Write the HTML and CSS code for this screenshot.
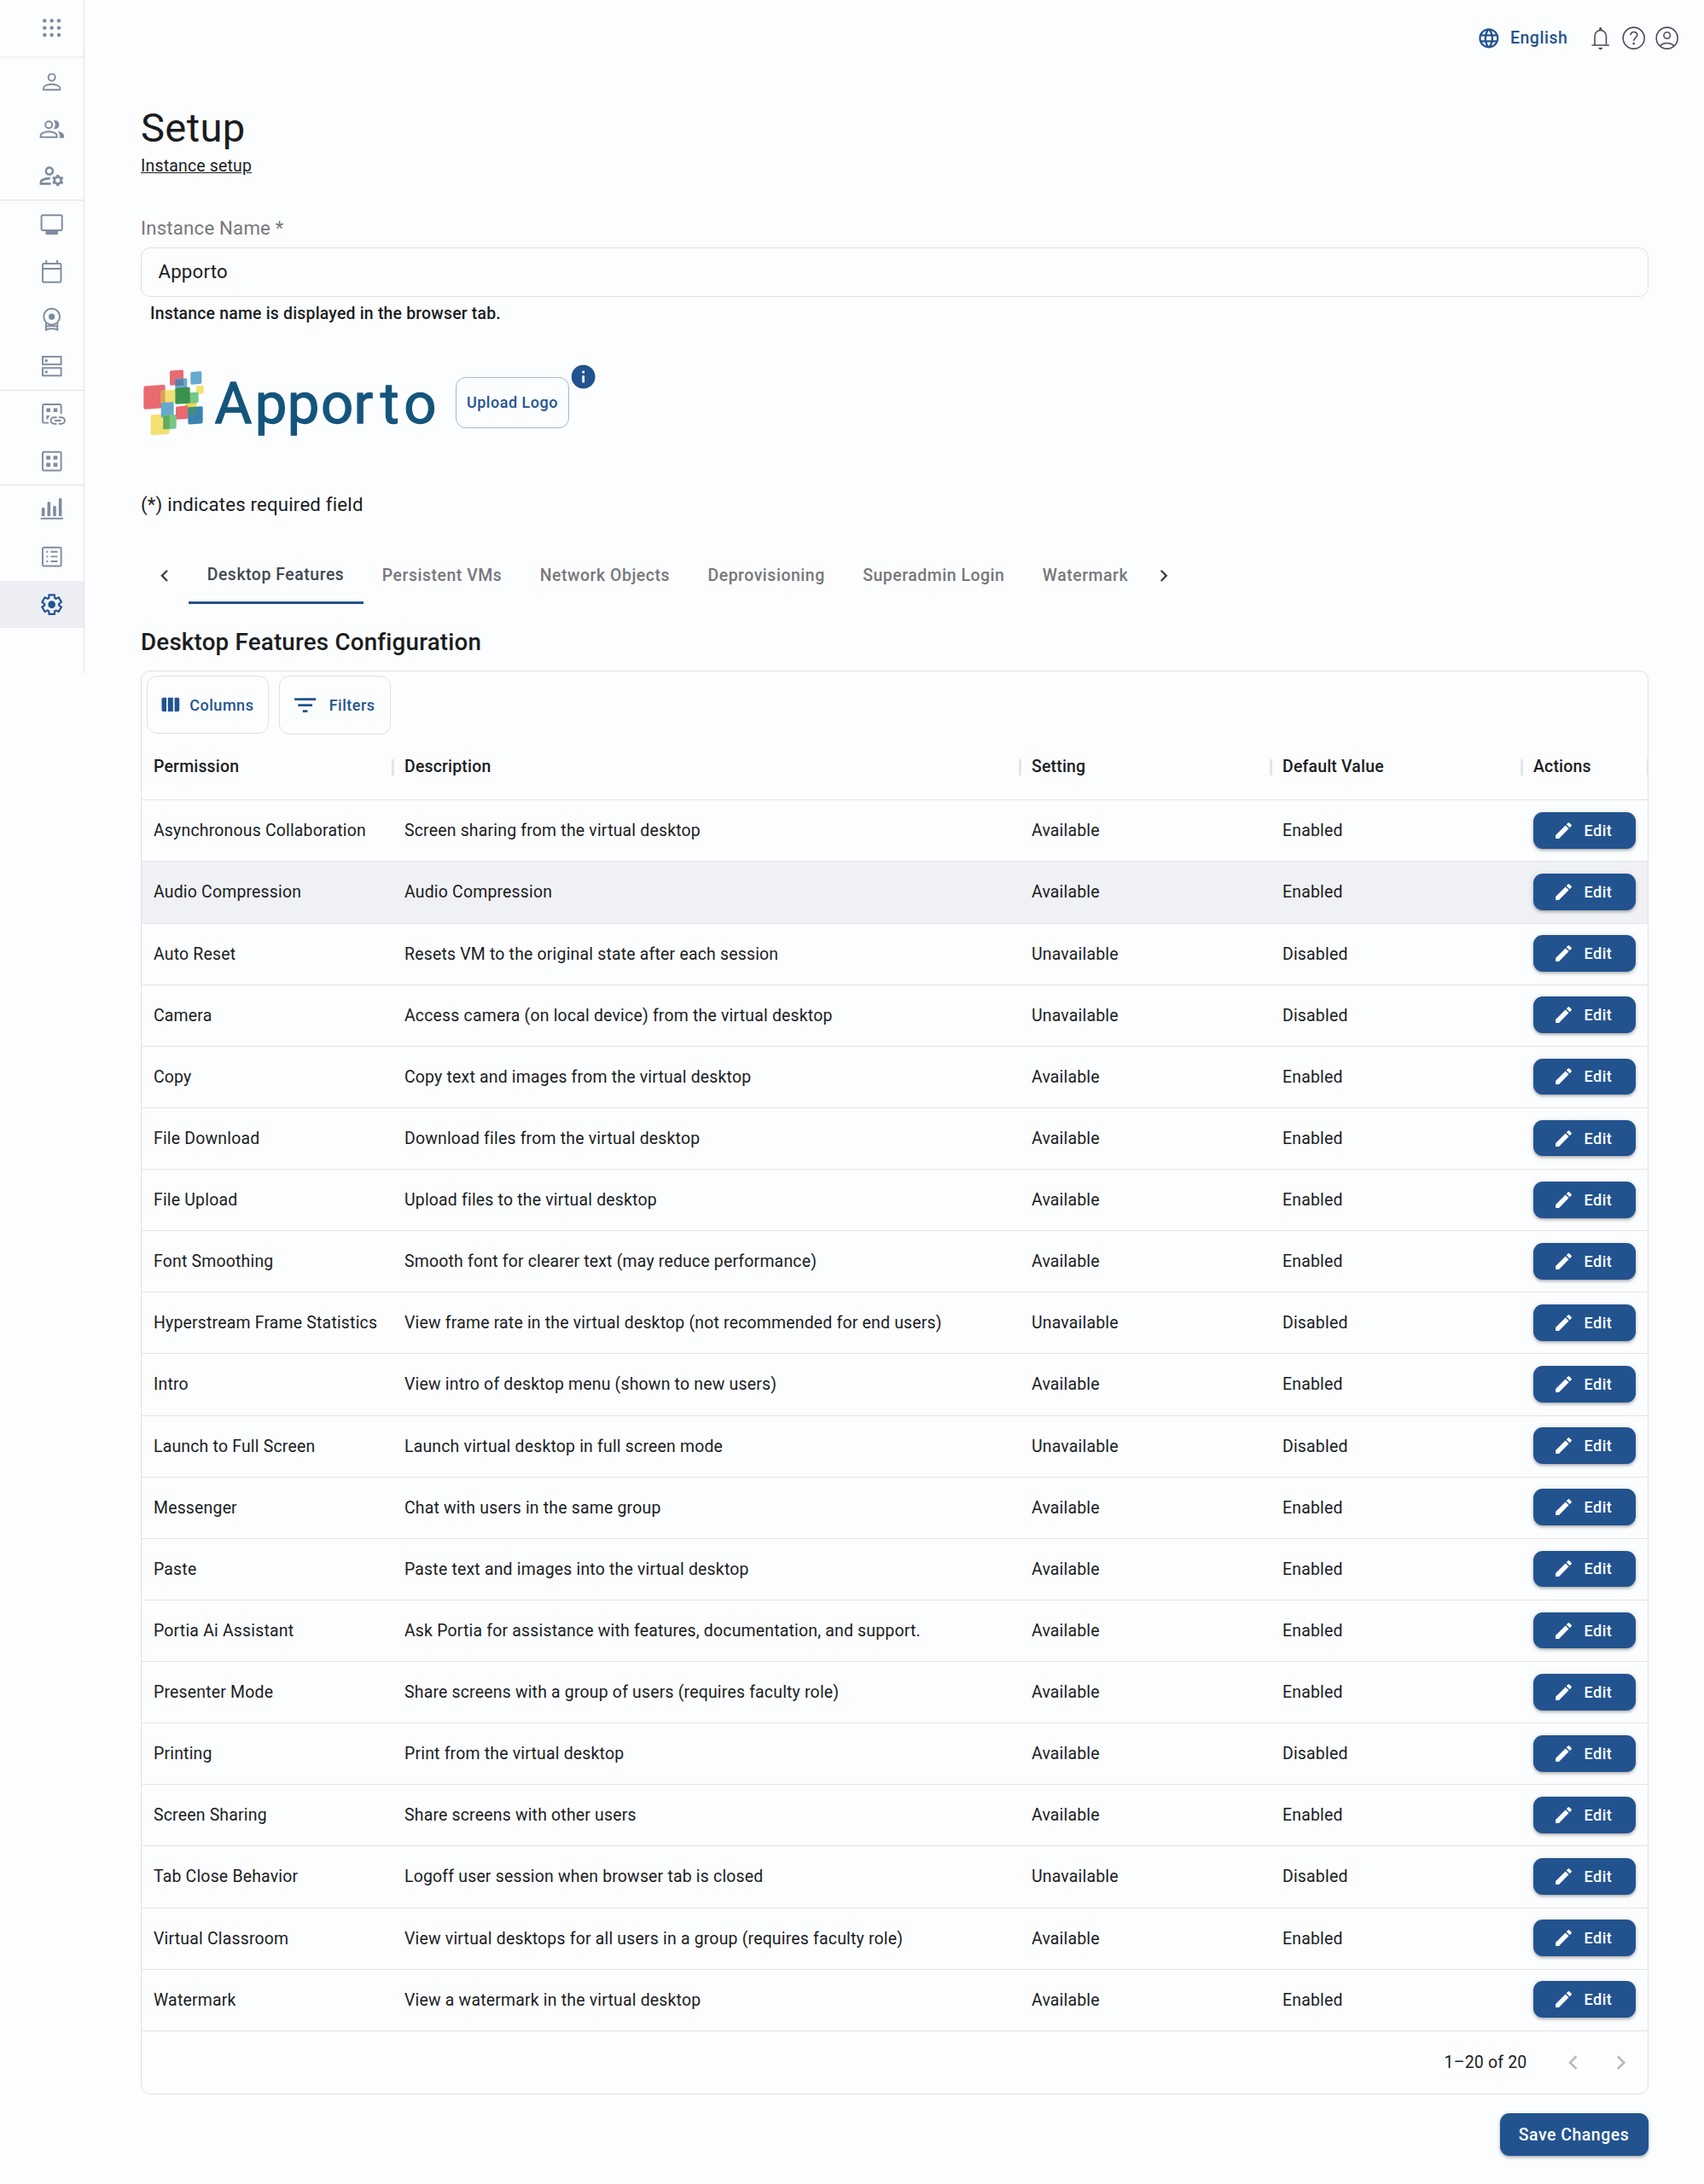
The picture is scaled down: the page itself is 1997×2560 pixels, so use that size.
FILE: index.html
```html
<!DOCTYPE html>
<html lang="en">
<head>
    <meta charset="UTF-8">
    <meta name="viewport" content="width=device-width, initial-scale=1.0">
    <title>Apporto</title>
    <link rel="stylesheet" href="styles.css">
</head>
<body>

<!-- shared icons -->
<svg class="sprite">
    <symbol id="pencil" viewBox="0 0 24 24"><path d="M3 17.25V21h3.75L17.81 9.94l-3.75-3.75L3 17.25zM20.71 7.04c.39-.39.39-1.02 0-1.41l-2.34-2.34a1 1 0 0 0-1.41 0l-1.83 1.83 3.75 3.75 1.83-1.83z"/></symbol>
    <symbol id="left" viewBox="0 0 24 24"><path d="M15.41 16.59 10.83 12l4.58-4.59L14 6l-6 6 6 6z"/></symbol>
    <symbol id="right" viewBox="0 0 24 24"><path d="M8.59 16.59 13.17 12 8.59 7.41 10 6l6 6-6 6z"/></symbol>
    <symbol id="cog" viewBox="0 0 24 24"><path d="M9.25 22l-.4-3.2q-.325-.125-.612-.3-.288-.175-.563-.375L4.7 19.375l-2.75-4.75 2.575-1.95Q4.5 12.5 4.5 12.338v-.675q0-.163.025-.338L1.95 9.375l2.75-4.75 2.975 1.25q.275-.2.575-.375.3-.175.6-.3l.4-3.2h5.5l.4 3.2q.325.125.613.3.287.175.562.375l2.975-1.25 2.75 4.75-2.575 1.95q.025.175.025.338v.674q0 .163-.05.338l2.575 1.95-2.75 4.75-2.95-1.25q-.275.2-.575.375-.3.175-.6.3l-.4 3.2z"/></symbol>
</svg>

<nav class="sidebar">
    <a class="side-item apps"><svg class="icon fill" viewBox="0 0 24 24"><circle cx="6" cy="6" r="1.6"/><circle cx="12" cy="6" r="1.6"/><circle cx="18" cy="6" r="1.6"/><circle cx="6" cy="12" r="1.6"/><circle cx="12" cy="12" r="1.6"/><circle cx="18" cy="12" r="1.6"/><circle cx="6" cy="18" r="1.6"/><circle cx="12" cy="18" r="1.6"/><circle cx="18" cy="18" r="1.6"/></svg></a>
    <a class="side-item"><svg class="icon" viewBox="0 0 24 24"><circle cx="12" cy="8.4" r="2.9"/><path d="M5.1 18.9v-1.3c0-1 .5-1.6 1.4-2.1 1.5-.8 3.5-1.3 5.5-1.3s4 .5 5.5 1.3c.9.5 1.4 1.1 1.4 2.1v1.3z"/></svg></a>
    <a class="side-item"><svg class="icon" viewBox="0 0 24 24"><circle cx="9.5" cy="8.1" r="2.9"/><path d="M2.6 18.6v-1.3c0-1 .5-1.6 1.4-2.1 1.5-.8 3.5-1.3 5.5-1.3s3.9.5 5.4 1.3c.9.5 1.4 1.1 1.4 2.1v1.3z"/><path class="solid" d="M13.6 11.6a5.5 5.5 0 0 0 0-7.1 3.7 3.7 0 1 1 0 7.1zM18.7 19.3v-2.1c0-1.5-.7-2.7-1.9-3.7 3 .5 5.5 1.7 5.5 3.7v2.1z"/></svg></a>
    <a class="side-item line"><svg class="icon" viewBox="0 0 24 24"><g class="bold"><circle cx="10" cy="7.5" r="2.9"/><path d="M11.3 18.3H2.8v-1.3c0-1 .5-1.6 1.4-2 1.7-.8 3.6-1.3 5.8-1.2h.7"/></g><circle cx="17.1" cy="15.4" r="2.8" class="bold"/><path class="solid" d="M16.1 10.6h2l.5 2h-3zM16.1 20.2h2l.5-2h-3zM12.4 13.9l1-1.8 2 .7-1.3 2.2zM20.8 12.1l1 1.8-1.6 1.3-1.3-2.2zM12.4 16.9l1 1.8 2-.7-1.3-2.2zM20.8 18.7l1-1.8-1.6-1.3-1.3 2.2z"/></svg></a>
    <a class="side-item"><svg class="icon" viewBox="0 0 24 24"><rect x="3.3" y="4.5" width="17.4" height="12.8" rx="1"/><path class="solid" d="M6.8 17.5h10.5v2.5a.9.9 0 0 1-.9.9H7.7a.9.9 0 0 1-.9-.9z"/></svg></a>
    <a class="side-item"><svg class="icon" viewBox="0 0 24 24"><rect x="4.3" y="5" width="15.5" height="15.7" rx="1"/><path d="M4.3 9.4h15.5M7.4 5V2.2M16.6 5V2.2"/></svg></a>
    <a class="side-item"><svg class="icon" viewBox="0 0 24 24"><circle cx="12" cy="9.5" r="6.8"/><circle class="solid" cx="12" cy="9.5" r="2.6"/><path d="M7.2 14.6v6.1c1.6-.7 3.2-1 4.8-1s3.2.3 4.8 1v-6.1M7.2 17.7c3.2-.6 6.4-.6 9.6 0"/></svg></a>
    <a class="side-item line"><svg class="icon" viewBox="0 0 24 24"><rect x="4.3" y="3.7" width="15.6" height="6.5"/><rect x="4.3" y="13.2" width="15.6" height="6.5"/><circle class="solid" cx="7.4" cy="7" r="1.2"/><circle class="solid" cx="7.4" cy="16.5" r="1.2"/></svg></a>
    <a class="side-item"><svg class="icon" viewBox="0 0 24 24"><path d="M19.9 11.6V4.6a1 1 0 0 0-1-1H5.4a1 1 0 0 0-1 1v13.6a1 1 0 0 0 1 1h4"/><path class="solid" d="M7.5 6.8h3.3v3.3H7.5zM13.5 6.8h3.3v3.3h-3.3zM7.5 13h3l-1.2 1.6-.6 1.6H7.5z"/><path d="M16.2 14.6h-2.3a2.7 2.7 0 0 0 0 5.4h2.3M18 14.6h2.3a2.7 2.7 0 0 1 0 5.4H18M14.4 17.3h5.4"/></svg></a>
    <a class="side-item line"><svg class="icon" viewBox="0 0 24 24"><rect x="4.3" y="4.2" width="15.6" height="15.6" rx="1"/><path class="solid" d="M7.4 7.3h3.4v3.4H7.4zM13.4 7.3h3.4v3.4h-3.4zM7.4 13.3h3.4v3.4H7.4zM13.4 13.3h3.4v3.4h-3.4z"/></svg></a>
    <a class="side-item"><svg class="icon" viewBox="0 0 24 24"><path class="solid" d="M3.5 12a1.3 1.3 0 0 1 2.6 0v6H3.5zM8.3 7a1.3 1.3 0 0 1 2.6 0v11H8.3zM13.1 10.5a1.3 1.3 0 0 1 2.6 0V18h-2.6zM17.9 4a1.3 1.3 0 0 1 2.6 0v14h-2.6zM2.6 19.3h19v1.4h-19z"/></svg></a>
    <a class="side-item"><svg class="icon" viewBox="0 0 24 24"><rect x="4.3" y="4.2" width="15.6" height="15.6" rx="1"/><path d="M11.2 7.8h5.7M11.2 11.8h5.7M11.2 15.8h5.7M7.4 7.8h1.5M7.4 11.8h1.5M7.4 15.8h1.5"/></svg></a>
    <a class="side-item active"><svg class="icon" viewBox="0 0 24 24"><use class="gear" href="#cog" x="2.3" y="2.3" width="19.4" height="19.4"/><circle class="solid" cx="12" cy="12" r="3.1"/></svg></a>
</nav>

<div class="main">
    <header class="topbar">
        <a class="language">
            <svg viewBox="0 0 24 24"><path d="M11.99 2C6.47 2 2 6.48 2 12s4.47 10 9.99 10C17.52 22 22 17.52 22 12S17.52 2 11.99 2zm6.93 6h-2.95c-.32-1.25-.78-2.45-1.38-3.56 1.84.63 3.37 1.91 4.33 3.56zM12 4.04c.83 1.2 1.48 2.53 1.91 3.96h-3.82c.43-1.43 1.08-2.76 1.91-3.96zM4.26 14C4.1 13.36 4 12.69 4 12s.1-1.36.26-2h3.38c-.08.66-.14 1.32-.14 2s.06 1.34.14 2H4.26zm.82 2h2.95c.32 1.25.78 2.45 1.38 3.56-1.84-.63-3.37-1.9-4.33-3.56zm2.95-8H5.08c.96-1.66 2.49-2.93 4.33-3.56C8.81 5.55 8.35 6.75 8.03 8zM12 19.96c-.83-1.2-1.48-2.53-1.91-3.96h3.82c-.43 1.43-1.08 2.76-1.91 3.96zM14.34 14H9.66c-.09-.66-.16-1.32-.16-2s.07-1.35.16-2h4.68c.09.65.16 1.32.16 2s-.07 1.34-.16 2zm.25 5.56c.6-1.11 1.06-2.31 1.38-3.56h2.95c-.96 1.65-2.49 2.93-4.33 3.56zM16.36 14c.08-.66.14-1.32.14-2s-.06-1.34-.14-2h3.38c.16.64.26 1.31.26 2s-.1 1.36-.26 2h-3.38z"/></svg>
            English
        </a>
        <svg class="icon" viewBox="0 0 24 24"><path d="M4.7 18h14.7M7.2 18v-7.7a4.85 4.85 0 0 1 9.7 0V18"/><path class="solid" d="M10.9 5.6V4a1.15 1.15 0 0 1 2.3 0v1.6zM10.3 20h3.5a1.75 1.75 0 0 1-3.5 0z"/></svg>
        <svg class="icon" viewBox="0 0 24 24"><circle cx="12" cy="12" r="9"/><path d="M9.3 9.5c.2-1.7 1.3-2.6 2.8-2.6 1.6 0 2.8 1 2.8 2.5 0 2.1-2.8 2.5-2.8 4.9"/><circle class="solid" cx="12" cy="16.6" r="1"/></svg>
        <svg class="icon" viewBox="0 0 24 24"><circle cx="12" cy="12" r="9"/><circle cx="12" cy="9.7" r="2.7"/><path d="M6.1 18.5c1.7-1.6 3.7-2.3 5.9-2.3s4.2.7 5.9 2.3"/></svg>
    </header>

    <div class="content">
        <h1>Setup</h1>
        <a class="crumb">Instance setup</a>

        <label class="label" for="instance">Instance Name *</label>
        <input class="field" type="text" id="instance" value="Apporto">
        <div class="helper">Instance name is displayed in the browser tab.</div>

        <div class="logo-row">
            <svg class="logo" viewBox="5 0 355 110">
                <g class="logo-mark" transform="scale(.3333)">
                    <rect x="28" y="95" width="76" height="82" rx="7" fill="#e96a6f"/>
                    <rect x="120" y="42" width="48" height="52" rx="5" fill="#e96a6f"/>
                    <rect x="53" y="197" width="66" height="71" rx="6" fill="#f3e070"/>
                    <rect x="193" y="47" width="39" height="44" rx="5" fill="#65a9cf"/>
                    <rect x="213" y="96" width="26" height="29" rx="4" fill="#f3e070"/>
                    <rect x="89" y="112" width="50" height="46" rx="5" fill="#f3e070"/>
                    <rect x="89" y="114" width="15" height="42" fill="#d9a25c"/>
                    <rect x="139" y="71" width="42" height="44" rx="5" fill="#65a9cf"/>
                    <rect x="139" y="73" width="29" height="23" fill="#5c7fa9"/>
                    <rect x="174" y="140" width="40" height="42" rx="5" fill="#ecd84f"/>
                    <rect x="184" y="120" width="37" height="38" rx="5" fill="#73c787"/>
                    <rect x="139" y="103" width="52" height="57" rx="5" fill="#3a924e"/>
                    <rect x="89" y="155" width="45" height="52" rx="5" fill="#65a9cf"/>
                    <rect x="141" y="168" width="44" height="46" rx="5" fill="#e96a6f"/>
                    <rect x="184" y="170" width="52" height="61" rx="6" fill="#3a83b0"/>
                    <rect x="184" y="173" width="29" height="24" fill="#3f8f7c"/>
                    <rect x="97" y="199" width="46" height="50" rx="5" fill="#73c787"/>
                    <rect x="97" y="201" width="22" height="47" rx="3" fill="#62ac5b"/>
                </g>
                <text class="logo-text" y="75.8" x="92.5 139.8 177.8 217 255.4 286.7 314.3">Apporto</text>
            </svg>
            <button class="btn-outline upload">Upload Logo</button>
            <svg class="info" viewBox="0 0 24 24"><circle cx="12" cy="12" r="10"/><path d="M11 7h2v2h-2zM11 11h2v6h-2z"/></svg>
        </div>

        <div class="required">(*) indicates required field</div>

        <div class="tabs">
            <span class="tab-scroll"><svg><use href="#left"/></svg></span>
            <a class="tab selected">Desktop Features</a>
            <a class="tab">Persistent VMs</a>
            <a class="tab">Network Objects</a>
            <a class="tab">Deprovisioning</a>
            <a class="tab">Superadmin Login</a>
            <a class="tab">Watermark</a>
            <span class="tab-scroll next"><svg><use href="#right"/></svg></span>
        </div>

        <h2>Desktop Features Configuration</h2>

        <div class="grid">
            <div class="toolbar">
                <button class="btn-outline columns"><svg viewBox="0 0 24 24"><path d="M3 6.5A1.5 1.5 0 0 1 4.5 5h3.3v14H4.5A1.5 1.5 0 0 1 3 17.5zM9.3 5h5.3v14H9.3zM16.1 5h3.4A1.5 1.5 0 0 1 21 6.5v11a1.5 1.5 0 0 1-1.5 1.5h-3.4z"/></svg>Columns</button>
                <button class="btn-outline filters"><svg viewBox="0 0 24 24"><path d="M10 18h4v-2h-4v2zM3 6v2h18V6H3zm3 7h12v-2H6v2z"/></svg>Filters</button>
            </div>
            <div class="row head"><div>Permission</div><div>Description</div><div>Setting</div><div>Default Value</div><div>Actions</div></div>
            <div class="row"><div>Asynchronous Collaboration</div><div>Screen sharing from the virtual desktop</div><div>Available</div><div>Enabled</div><div><button class="btn edit"><svg><use href="#pencil"/></svg>Edit</button></div></div>
            <div class="row hover"><div>Audio Compression</div><div>Audio Compression</div><div>Available</div><div>Enabled</div><div><button class="btn edit"><svg><use href="#pencil"/></svg>Edit</button></div></div>
            <div class="row"><div>Auto Reset</div><div>Resets VM to the original state after each session</div><div>Unavailable</div><div>Disabled</div><div><button class="btn edit"><svg><use href="#pencil"/></svg>Edit</button></div></div>
            <div class="row"><div>Camera</div><div>Access camera (on local device) from the virtual desktop</div><div>Unavailable</div><div>Disabled</div><div><button class="btn edit"><svg><use href="#pencil"/></svg>Edit</button></div></div>
            <div class="row"><div>Copy</div><div>Copy text and images from the virtual desktop</div><div>Available</div><div>Enabled</div><div><button class="btn edit"><svg><use href="#pencil"/></svg>Edit</button></div></div>
            <div class="row"><div>File Download</div><div>Download files from the virtual desktop</div><div>Available</div><div>Enabled</div><div><button class="btn edit"><svg><use href="#pencil"/></svg>Edit</button></div></div>
            <div class="row"><div>File Upload</div><div>Upload files to the virtual desktop</div><div>Available</div><div>Enabled</div><div><button class="btn edit"><svg><use href="#pencil"/></svg>Edit</button></div></div>
            <div class="row"><div>Font Smoothing</div><div>Smooth font for clearer text (may reduce performance)</div><div>Available</div><div>Enabled</div><div><button class="btn edit"><svg><use href="#pencil"/></svg>Edit</button></div></div>
            <div class="row"><div>Hyperstream Frame Statistics</div><div>View frame rate in the virtual desktop (not recommended for end users)</div><div>Unavailable</div><div>Disabled</div><div><button class="btn edit"><svg><use href="#pencil"/></svg>Edit</button></div></div>
            <div class="row"><div>Intro</div><div>View intro of desktop menu (shown to new users)</div><div>Available</div><div>Enabled</div><div><button class="btn edit"><svg><use href="#pencil"/></svg>Edit</button></div></div>
            <div class="row"><div>Launch to Full Screen</div><div>Launch virtual desktop in full screen mode</div><div>Unavailable</div><div>Disabled</div><div><button class="btn edit"><svg><use href="#pencil"/></svg>Edit</button></div></div>
            <div class="row"><div>Messenger</div><div>Chat with users in the same group</div><div>Available</div><div>Enabled</div><div><button class="btn edit"><svg><use href="#pencil"/></svg>Edit</button></div></div>
            <div class="row"><div>Paste</div><div>Paste text and images into the virtual desktop</div><div>Available</div><div>Enabled</div><div><button class="btn edit"><svg><use href="#pencil"/></svg>Edit</button></div></div>
            <div class="row"><div>Portia Ai Assistant</div><div>Ask Portia for assistance with features, documentation, and support.</div><div>Available</div><div>Enabled</div><div><button class="btn edit"><svg><use href="#pencil"/></svg>Edit</button></div></div>
            <div class="row"><div>Presenter Mode</div><div>Share screens with a group of users (requires faculty role)</div><div>Available</div><div>Enabled</div><div><button class="btn edit"><svg><use href="#pencil"/></svg>Edit</button></div></div>
            <div class="row"><div>Printing</div><div>Print from the virtual desktop</div><div>Available</div><div>Disabled</div><div><button class="btn edit"><svg><use href="#pencil"/></svg>Edit</button></div></div>
            <div class="row"><div>Screen Sharing</div><div>Share screens with other users</div><div>Available</div><div>Enabled</div><div><button class="btn edit"><svg><use href="#pencil"/></svg>Edit</button></div></div>
            <div class="row"><div>Tab Close Behavior</div><div>Logoff user session when browser tab is closed</div><div>Unavailable</div><div>Disabled</div><div><button class="btn edit"><svg><use href="#pencil"/></svg>Edit</button></div></div>
            <div class="row"><div>Virtual Classroom</div><div>View virtual desktops for all users in a group (requires faculty role)</div><div>Available</div><div>Enabled</div><div><button class="btn edit"><svg><use href="#pencil"/></svg>Edit</button></div></div>
            <div class="row"><div>Watermark</div><div>View a watermark in the virtual desktop</div><div>Available</div><div>Enabled</div><div><button class="btn edit"><svg><use href="#pencil"/></svg>Edit</button></div></div>
            <div class="pager">
                <span>1–20 of 20</span>
                <svg><use href="#left"/></svg>
                <svg><use href="#right"/></svg>
            </div>
        </div>

        <div class="save-row"><button class="btn save">Save Changes</button></div>
    </div>
</div>

</body>
</html>
```
FILE: styles.css
```css
* {
    box-sizing: border-box;
}
body {
    margin: 0;
    display: flex;
    align-items: flex-start;
    height: 2560px;
    overflow: hidden;
    background: #fcfdff;
    color: #1a1c1e;
    font-family: Roboto, sans-serif;
    font-size: 19.415px;
    letter-spacing: 0.01071em;
    line-height: 27.7px;
}
button {
    font-family: inherit;
    cursor: pointer;
    padding: 0;
}
.sprite {
    position: absolute;
    width: 0;
    height: 0;
}
.icon {
    width: 33.3px;
    height: 33.3px;
    fill: none;
    stroke: currentColor;
    stroke-width: 1.4;
    overflow: visible;
}
.icon.fill, .icon .solid {
    fill: currentColor;
    stroke: none;
}
.icon .bold {
    stroke-width: 1.9;
}
.icon .gear {
    stroke-width: 1.9;
}

/* sidebar */
.sidebar {
    width: 99px;
    height: 789px;
    flex: none;
    border-right: 1px solid #dfe1e6;
    color: #7f8c9f;
}
.side-item {
    display: flex;
    align-items: center;
    height: 55.7px;
    padding-left: 43.6px;
}
.side-item.apps {
    height: 68px;
    border-bottom: 2px solid #eff0f3;
}
.side-item.line {
    border-bottom: 1px solid #dfe1e6;
}
.side-item.active {
    background: #edeef3;
    color: #22538f;
}

/* header */
.main {
    flex: 1;
}
.topbar {
    height: 89px;
    display: flex;
    justify-content: flex-end;
    align-items: center;
    gap: 5.5px;
    padding-right: 28.3px;
    color: #474d55;
}
.topbar .icon {
    stroke-width: 1.15;
}
.language {
    display: flex;
    align-items: center;
    gap: 11px;
    margin-right: 16.5px;
    color: #22538f;
    font-weight: 500;
    letter-spacing: 0.02857em;
}
.language svg {
    width: 27.7px;
    height: 27.7px;
    fill: currentColor;
}

/* form */
.content {
    padding: 31.5px 67px 0 66px;
}
h1 {
    margin: 0;
    font-size: 47.15px;
    font-weight: 400;
    line-height: 58.2px;
    letter-spacing: 0.00735em;
}
.crumb {
    display: block;
    margin-top: 2.3px;
    text-decoration: underline;
}
.label {
    display: block;
    margin-top: 42.5px;
    font-size: 22.19px;
    line-height: 33.3px;
    letter-spacing: 0.00938em;
    color: #77777a;
}
.field {
    display: block;
    width: 100%;
    height: 57.5px;
    margin-top: 5.7px;
    padding: 0 19.5px 1px;
    border: 1px solid #dfe1e6;
    border-radius: 11px;
    background: transparent;
    color: #1a1c1e;
    font-family: inherit;
    font-size: 22.19px;
    letter-spacing: 0.00938em;
}
.helper {
    margin: 6px 0 0 11px;
    font-weight: 500;
}
.logo-row {
    display: flex;
    margin-top: 38.5px;
    height: 110px;
}
.logo {
    width: 355px;
    height: 110px;
    margin-left: -1px;
}
.logo-mark rect {
    transform-box: fill-box;
    transform-origin: center;
    transform: skewY(-4deg);
}
.logo-text {
    font-size: 67px;
    letter-spacing: 0;
    fill: #14557c;
    stroke: #14557c;
    stroke-width: 1.3;
    stroke-linejoin: round;
}
.btn-outline {
    display: flex;
    align-items: center;
    justify-content: center;
    border: 1px solid #dfe1e6;
    border-radius: 12px;
    background: transparent;
    color: #22538f;
    font-size: 18.03px;
    font-weight: 500;
    letter-spacing: 0.02857em;
}
.btn-outline svg {
    fill: currentColor;
}
.upload {
    width: 133.5px;
    height: 60px;
    margin: 21.7px 0 0 14.7px;
    border-color: #a3b8d3;
}
.info {
    width: 33.3px;
    height: 33.3px;
    margin: 5.5px 0 0 -0.5px;
    fill: #22538f;
}
.info path {
    fill: #fff;
}
.required {
    margin-top: 45px;
    font-size: 22.19px;
    line-height: 33.3px;
    letter-spacing: 0.00938em;
}

/* tabs */
.tabs {
    display: flex;
    height: 66.5px;
    margin-top: 33.7px;
}
.tab {
    display: flex;
    align-items: center;
    padding: 0 22.2px;
    color: #77777a;
    font-weight: 500;
    letter-spacing: 0.02857em;
}
.tab.selected {
    color: #3f4752;
    border-bottom: 3px solid #22538f;
}
.tab-scroll {
    display: flex;
    align-items: center;
    justify-content: center;
    width: 55.5px;
}
.tab-scroll.next {
    width: 38px;
}
.tab-scroll svg {
    width: 27.7px;
    height: 27.7px;
    fill: #3a3d42;
}
h2 {
    margin: 22.4px 0 10.7px;
    font-size: 27.74px;
    font-weight: 500;
    line-height: 44.4px;
    letter-spacing: 0.0075em;
}

/* table */
.grid {
    border: 1px solid #dfe1e6;
    border-radius: 11px;
}
.toolbar {
    display: flex;
    align-items: flex-start;
    gap: 11.5px;
    height: 73.5px;
    padding: 5.5px 6px;
}
.columns {
    width: 143px;
    height: 67.5px;
    gap: 9px;
}
.columns svg {
    width: 27.7px;
    height: 27.7px;
    margin-left: -4px;
}
.filters {
    width: 131px;
    height: 68.5px;
    gap: 11px;
}
.filters svg {
    width: 33.3px;
    height: 33.3px;
    margin-left: -3px;
}
.row {
    display: grid;
    grid-template-columns: 294px 735px 294px 294px 1fr;
    align-items: center;
    height: 72.13px;
    border-bottom: 1px solid #e3e4e8;
}
.row > div {
    padding: 0.5px 14px 0;
}
.row > div:last-child {
    padding-top: 0;
}
.row.head {
    height: 78px;
    font-weight: 500;
}
.row.head > div {
    display: flex;
    align-items: center;
    justify-content: space-between;
    padding-right: 0;
}
.row.head > div::after {
    content: "";
    width: 3px;
    height: 19px;
    margin-right: -2px;
    background: #e3e4e7;
}
.row.head > div:last-child::after {
    width: 1px;
    margin-right: 0;
}
.row.hover {
    background: #f0f1f5;
}
.btn {
    display: flex;
    align-items: center;
    border: 0;
    border-radius: 11px;
    background: #22538f;
    color: #fff;
    font-weight: 500;
    letter-spacing: 0.02857em;
    box-shadow: 0 2px 3px rgba(0, 0, 0, 0.22), 0 1px 6px rgba(0, 0, 0, 0.14);
}
.edit {
    width: 119.5px;
    height: 42.7px;
    margin-top: -1px;
    padding-left: 23px;
    gap: 11.5px;
    font-size: 18.03px;
}
.edit svg {
    width: 25px;
    height: 25px;
    fill: #fff;
}
.pager {
    display: flex;
    align-items: center;
    justify-content: flex-end;
    height: 73px;
    padding-right: 14px;
}
.pager span {
    margin-right: 38px;
}
.pager svg {
    width: 33.3px;
    height: 33.3px;
    fill: #b9bbbe;
}
.pager svg + svg {
    margin-left: 22.5px;
}
.save-row {
    display: flex;
    justify-content: flex-end;
    margin-top: 22.5px;
}
.save {
    width: 174px;
    height: 50px;
    justify-content: center;
    font-size: 19.415px;
}
```
